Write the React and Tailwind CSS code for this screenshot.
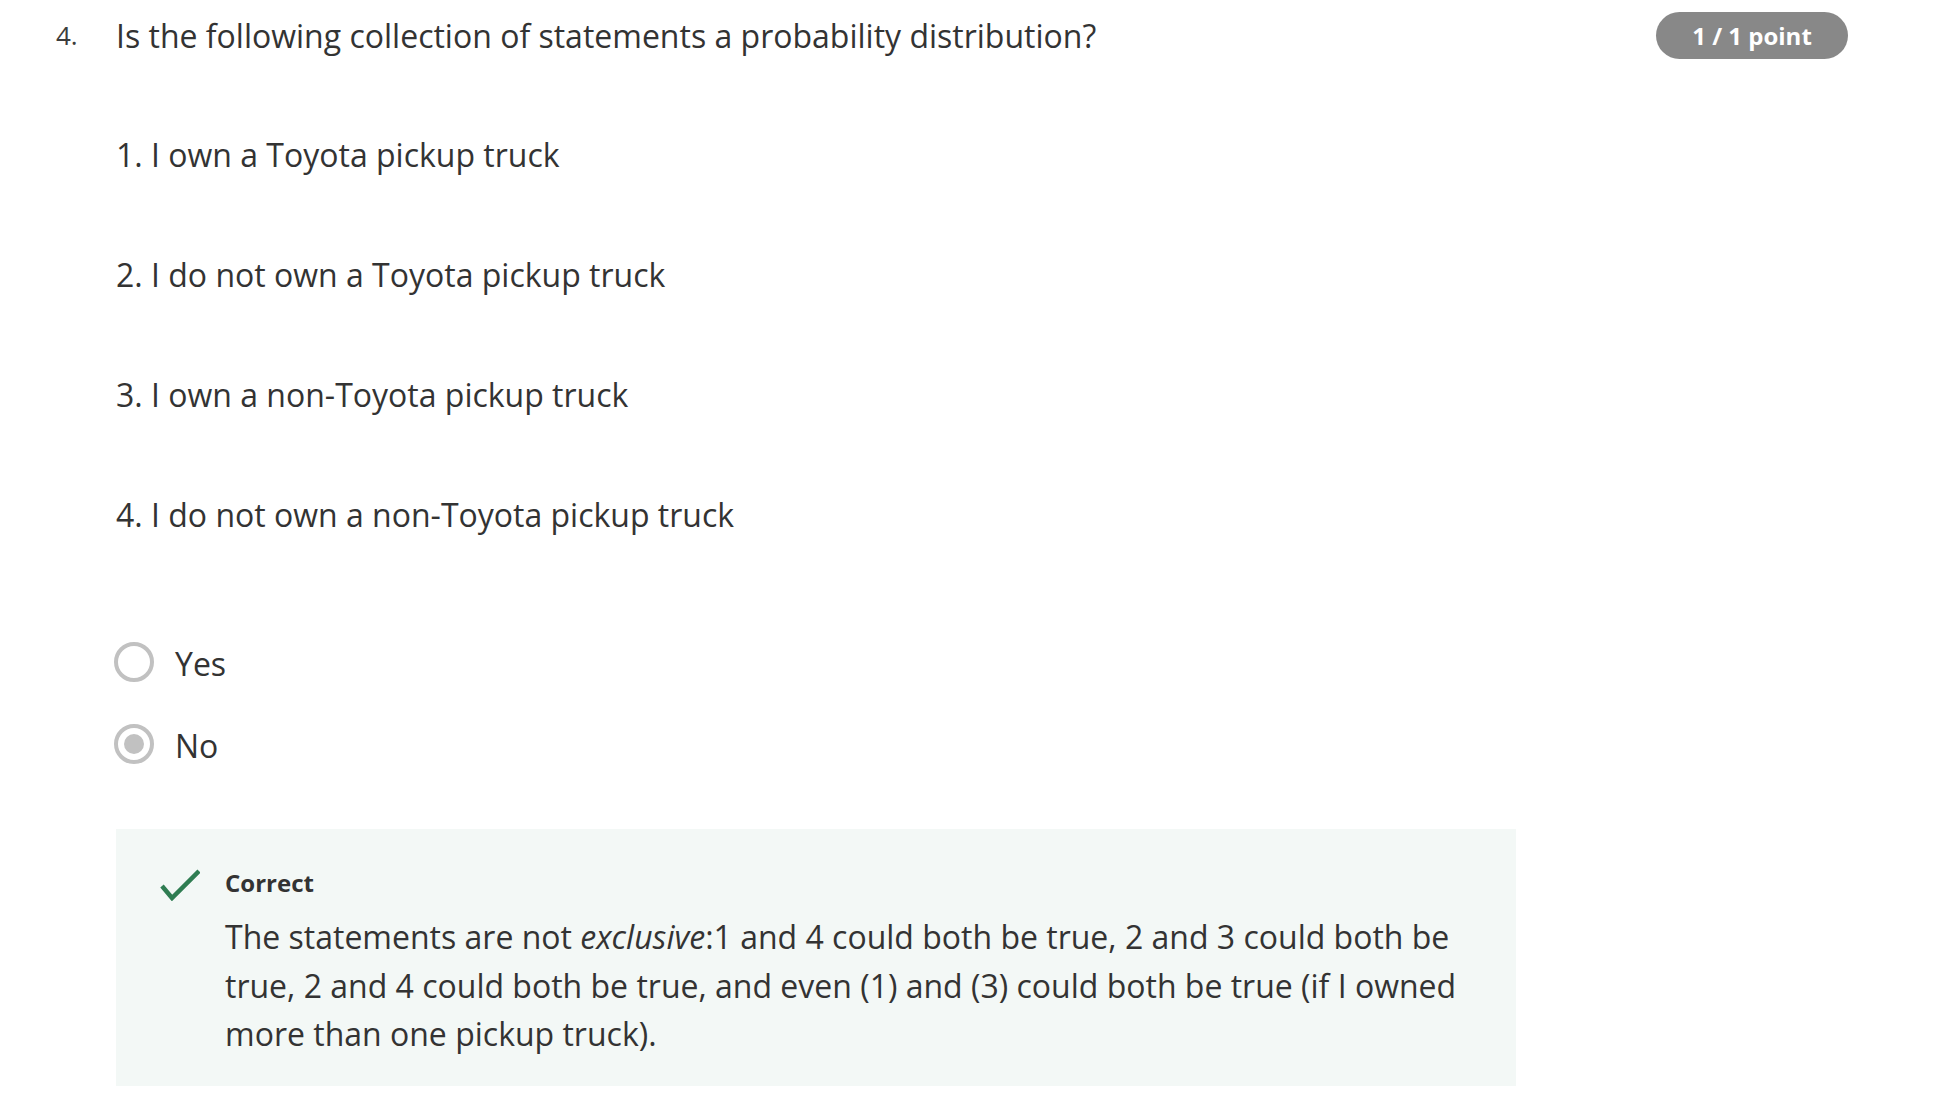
const items = [
  '1. I own a Toyota pickup truck',
  '2. I do not own a Toyota pickup truck',
  '3. I own a non-Toyota pickup truck',
  '4. I do not own a non-Toyota pickup truck',
]

function Radio({ checked, label }) {
  return (
    <label className="flex items-center gap-[21px] h-[48px] -ml-[2px]">
      <span className="w-[40px] h-[40px] rounded-full border-[4px] border-[#c1c1c1] flex items-center justify-center -mt-[5px]">
        {checked && <span className="w-[20px] h-[20px] rounded-full bg-[#c1c1c1]" />}
      </span>
      <span className="text-[32px] leading-[48px] text-[#333]">{label}</span>
    </label>
  )
}

export default function App() {
  return (
    <div className="w-[1950px] min-h-[1116px] bg-white text-[#333] font-['Open_Sans',sans-serif]">
      <div className="flex items-start pt-[12px] pr-[102px]">
        <span className="w-[116px] pl-[56px] text-[26px] leading-[40px] pt-[3px] text-[#3c3c3c]">4.</span>
        <h2 className="flex-1 text-[32px] leading-[48px] font-normal">
          Is the following collection of statements a probability distribution?
        </h2>
        <span className="w-[192px] h-[47px] rounded-full bg-[#888888] text-white text-[24px] font-bold flex items-center justify-center">
          1 / 1 point
        </span>
      </div>

      <div className="pl-[116px]">
        <div className="flex flex-col gap-[72px] mt-[71px]">
          {items.map(t => (
            <p key={t} className="text-[32px] leading-[48px]">{t}</p>
          ))}
        </div>

        <div className="flex flex-col gap-[34px] mt-[101px]">
          <Radio label="Yes" />
          <Radio label="No" checked />
        </div>

        {/* Feedback */}
        <div className="mt-[59px] w-[1400px] bg-[#f3f8f6] flex pl-[44px] pr-[46px] pt-[36px] pb-[27px]">
          <svg width="40" height="32" viewBox="0 0 40 32" className="shrink-0 mt-[4px]">
            <polyline points="2,17 12,29 39,2" fill="none" stroke="#2f7d52" strokeWidth="4.5" />
          </svg>
          <div className="ml-[25px]">
            <div className="text-[24px] leading-[36px] font-bold text-[#333]">Correct</div>
            <p className="mt-[12px] text-[32px] leading-[48.5px] text-[#333]">
              The statements are not <em>exclusive</em>:1 and 4 could both be true, 2 and 3 could both be true, 2 and 4 could both be true, and even (1) and (3) could both be true (if I owned more than one pickup truck).
            </p>
          </div>
        </div>
      </div>
    </div>
  )
}
